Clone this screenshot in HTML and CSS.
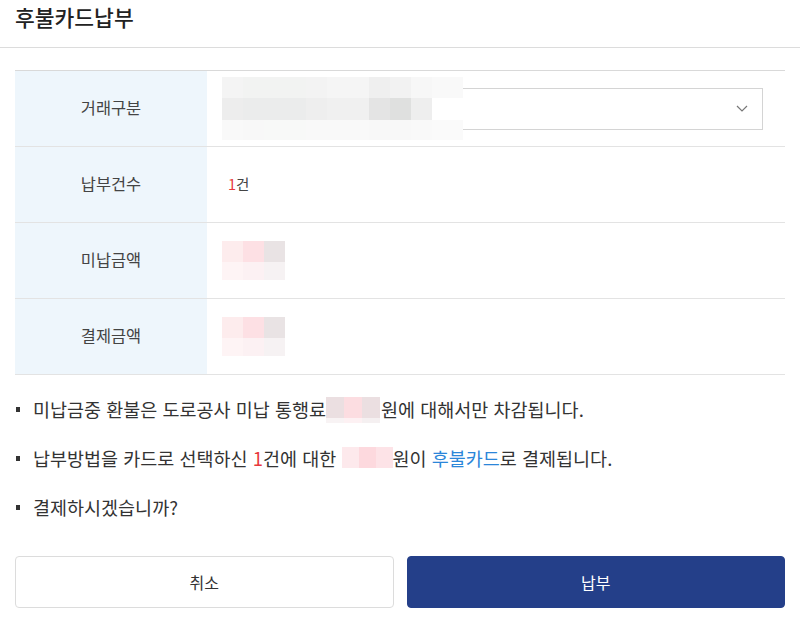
FILE: index.html
```html
<!DOCTYPE html>
<html lang="ko">
<head>
<meta charset="utf-8">
<title>후불카드납부</title>
<link rel="stylesheet" href="styles.css">
</head>
<body>
<div class="modal">
  <header class="modal-head">
    <h1 class="modal-title">후불카드납부</h1>
  </header>
  <div class="modal-body">
    <div class="info">
      <div class="info-row">
        <div class="info-label">거래구분</div>
        <div class="info-value">
          <div class="select">
            <svg class="chevron" width="12" height="7" viewBox="0 0 12 7"><path d="M1 1 L6 6 L11 1" fill="none" stroke="#777" stroke-width="1.2"/></svg>
          </div>
          <div class="mosaic mosaic-select">
            <span class="m" style="background:#f4f4f4"></span><span class="m" style="background:#f2f3f2"></span><span class="m" style="background:#f2f3f2"></span><span class="m" style="background:#f2f3f2"></span><span class="m" style="background:#f3f3f3"></span><span class="m" style="background:#f5f5f5"></span><span class="m" style="background:#f5f5f5"></span><span class="m" style="background:#efefef"></span><span class="m" style="background:#f2f2f2"></span><span class="m" style="background:#f7f7f7"></span><span class="m" style="background:#f9f9f9"></span>
            <span class="m" style="background:#ededed"></span><span class="m" style="background:#ebecec"></span><span class="m" style="background:#ebecec"></span><span class="m" style="background:#ebecec"></span><span class="m" style="background:#eeeeee"></span><span class="m" style="background:#f0f0f0"></span><span class="m" style="background:#f0f0f0"></span><span class="m" style="background:#e4e4e4"></span><span class="m" style="background:#dfe0df"></span><span class="m" style="background:#eeeeee"></span><span class="m" style="background:transparent"></span>
            <span class="m" style="background:#f9f9f9"></span><span class="m" style="background:#f8f8f8"></span><span class="m" style="background:#f8f9f8"></span><span class="m" style="background:#f8f9f8"></span><span class="m" style="background:#f9f9f9"></span><span class="m" style="background:#f9f9f9"></span><span class="m" style="background:#f9f9f9"></span><span class="m" style="background:#f8f8f8"></span><span class="m" style="background:#f8f8f8"></span><span class="m" style="background:#f9f9f9"></span><span class="m" style="background:#fafafa"></span>
          </div>
        </div>
      </div>
      <div class="info-row">
        <div class="info-label">납부건수</div>
        <div class="info-value"><span class="count"><em class="red">1</em>건</span></div>
      </div>
      <div class="info-row">
        <div class="info-label">미납금액</div>
        <div class="info-value">
          <div class="mosaic mosaic-amount">
            <span class="m" style="background:#fdeced"></span><span class="m" style="background:#fde0e4"></span><span class="m" style="background:#e9e3e4"></span>
            <span class="m" style="background:#fef4f5"></span><span class="m" style="background:#fcf1f3"></span><span class="m" style="background:#f6f2f3"></span>
          </div>
        </div>
      </div>
      <div class="info-row">
        <div class="info-label">결제금액</div>
        <div class="info-value">
          <div class="mosaic mosaic-amount">
            <span class="m" style="background:#fdeced"></span><span class="m" style="background:#fde0e4"></span><span class="m" style="background:#e9e3e4"></span>
            <span class="m" style="background:#fef4f5"></span><span class="m" style="background:#fcf1f3"></span><span class="m" style="background:#f6f2f3"></span>
          </div>
        </div>
      </div>
    </div>

    <ul class="notes">
      <li>미납금중 환불은 도로공사 미납 통행료<span class="mosaic mosaic-inline mosaic-a"><span class="m" style="background:#ebdfe1"></span><span class="m" style="background:#fcdde1"></span><span class="m" style="background:#ebdfe1"></span><span class="m" style="background:#f8f3f4"></span><span class="m" style="background:#fdf1f3"></span><span class="m" style="background:#f5f0f1"></span></span>원에 대해서만 차감됩니다.</li>
      <li>납부방법을 카드로 선택하신 <em class="red">1</em>건에 대한 <span class="mosaic mosaic-inline mosaic-b"><span class="m" style="background:#fde9ec"></span><span class="m" style="background:#fdd9de"></span><span class="m" style="background:#fde3e7"></span></span>원이 <span class="blue">후불카드</span>로 결제됩니다.</li>
      <li>결제하시겠습니까?</li>
    </ul>

    <div class="actions">
      <button class="btn btn-cancel" type="button">취소</button>
      <button class="btn btn-pay" type="button">납부</button>
    </div>
  </div>
</div>
</body>
</html>
```

FILE: styles.css
```css
* { box-sizing: border-box; }
html, body { margin: 0; padding: 0; background: #fff; }
body {
  font-family: "Noto Sans CJK KR", "Noto Sans", sans-serif;
  color: #333;
}
.modal { width: 800px; }
.modal-head {
  height: 48px;
  padding: 0 15px;
  border-bottom: 1px solid #dcdcdc;
}
.modal-title {
  margin: 0;
  font-size: 21.5px;
  font-weight: 500;
  line-height: 34px;
  color: #222;
}
.modal-body { padding: 22px 15px 0; }

.info { border-top: 1px solid #d9d9d9; }
.info-row {
  display: flex;
  height: 76px;
  border-bottom: 1px solid #e3e3e3;
}
.info-label {
  width: 192px;
  flex: none;
  background: #eef6fc;
  display: flex;
  align-items: center;
  justify-content: center;
  padding-bottom: 4px;
  font-size: 16.4px;
  color: #444;
}
.info-value {
  flex: 1;
  position: relative;
  display: flex;
  align-items: center;
  padding: 0 22px 0 15px;
  font-size: 14.5px;
}
.select {
  flex: 1;
  height: 42px;
  border: 1px solid #d4d4d4;
  display: flex;
  align-items: center;
  justify-content: flex-end;
  padding-right: 14px;
}
.chevron { display: block; }
.count { padding-left: 6px; padding-bottom: 3px; color: #444; }
.red { color: #e8383d; font-style: normal; }
.blue { color: #2b86d9; }

.mosaic { display: grid; }
.mosaic .m { display: block; }
.mosaic-select {
  position: absolute;
  left: 15px;
  top: 6px;
  grid-template-columns: repeat(10, 21px) 31px;
  grid-template-rows: 21px 22px 20px;
}
.mosaic-amount {
  grid-template-columns: repeat(3, 21px);
  grid-template-rows: 21px 18px;
}
.mosaic-inline {
  display: inline-grid;
  vertical-align: top;
}
.mosaic-a {
  grid-template-columns: repeat(3, 18px);
  grid-template-rows: 21px 5px;
  margin-right: 1px;
}
.mosaic-b {
  margin-top: 1px;
  grid-template-columns: repeat(3, 17px);
  grid-template-rows: 21px;
}

.notes {
  list-style: none;
  margin: 22px 0 0;
  padding: 0;
  display: flex;
  flex-direction: column;
  gap: 25px;
  font-size: 18.5px;
  color: #333;
}
.notes li {
  position: relative;
  height: 24px;
  padding-left: 18px;
  line-height: 24px;
  white-space: nowrap;
}
.notes li::before {
  content: "";
  position: absolute;
  left: 1px;
  top: 10px;
  width: 4px;
  height: 5px;
  background: #333;
}

.actions {
  display: grid;
  grid-template-columns: 1fr 1fr;
  gap: 13px;
  margin-top: 37px;
}
.btn {
  height: 52px;
  border-radius: 4px;
  font-family: inherit;
  font-size: 16px;
  cursor: pointer;
}
.btn-cancel {
  background: #fff;
  border: 1px solid #dcdcdc;
  color: #333;
}
.btn-pay {
  background: #243f89;
  border: 1px solid #243f89;
  color: #fff;
}
```
